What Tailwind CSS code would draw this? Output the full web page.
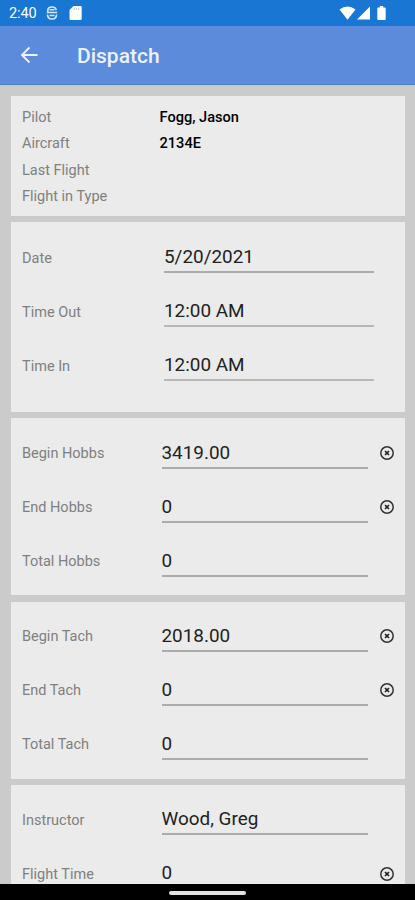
<!DOCTYPE html>
<html lang="en">
<head>
<meta charset="utf-8">
<title>Dispatch</title>
<script src="https://cdn.jsdelivr.net/npm/@tailwindcss/browser@4"></script>
</head>
<body class="w-[415px] h-[900px] overflow-hidden bg-[#cbcbcb] font-[Roboto,sans-serif] flex flex-col text-[14.5px] text-[#808080]">
<svg class="hidden">
  <symbol id="clear" viewBox="0 0 16 16"><circle cx="8" cy="8" r="6.2" fill="none" stroke="#333" stroke-width="1.5"/><path d="M6 6l4 4M10 6l-4 4" stroke="#222" stroke-width="1.7"/></symbol>
</svg>
<header class="shrink-0">
  <div class="h-[26px] bg-[#1976d2] flex items-center pl-[9px] pr-[28px] text-white">
    <span class="text-[14.5px] w-[29px] whitespace-nowrap tracking-[-0.1px] pt-[1px]">2:40</span>
    <svg class="ml-[8px] w-[12px] h-[14px]" viewBox="0 0 12 14" fill="none" stroke="#d5e6f8" stroke-width="1.6"><path d="M10.200 4.300C10 2 8.300 1 6 1S1.800 2 1.800 4.200V6.500M1.500 8.500C1.500 11.500 3.400 13 6 13s4.500-1.500 4.500-4.500M.8 6.500h10.400M3.500 3.800h5M3.500 9.500h5"/></svg>
    <svg class="ml-[11px] w-[13px] h-[14px]" viewBox="0 0 13 14"><path fill="#fff" d="M4.500 0H11.500Q12.700 0 12.700 1.200V12.800Q12.700 14 11.500 14H1.700Q.5 14 .5 12.800V4Z"/><path d="M5.200 2v2M7.500 2v2M9.800 2v2" stroke="#a9cbed" stroke-width="1"/></svg>
    <svg class="ml-auto w-[17px] h-[14px]" viewBox="0 0 17 14"><path fill="#fff" d="M.5 3.500Q8.500-2.500 16.500 3.500L8.500 13.700Z"/></svg>
    <svg class="ml-[1px] w-[13px] h-[14px]" viewBox="0 0 13 14"><path fill="#fff" d="M13 .5V13.500H0Z"/></svg>
    <svg class="ml-[7px] mr-[1px] w-[9px] h-[14px]" viewBox="0 0 9 15"><path fill="#fff" d="M2.700 0h3.600v1.500H8q1 0 1 1V14q0 1-1 1H1q-1 0-1-1V2.500q0-1 1-1h1.700Z"/></svg>
  </div>
  <div class="h-[59px] bg-[#5c8bdc] border-b border-[#4d80d2] flex items-center pl-[20px]">
    <svg class="w-[19px] h-[18px] mb-[1px]" viewBox="0 0 19 18" fill="none" stroke="#edf3fc" stroke-width="1.900"><path d="M17.500 9H2.500M9.500 1.500L2 9l7.500 7.500"/></svg>
    <h1 class="ml-[38px] mt-[4px] text-[21px] font-medium text-[#edf2fc]">Dispatch</h1>
  </div>
</header>
<main class="flex-1 min-h-0 overflow-hidden pt-[10.5px] pl-[11px] pr-[10px] flex flex-col">
  <section class="shrink-0 h-[120.500px] bg-[#ebebeb] pl-[11px] pt-[9.300px]">
    <div class="h-[26.300px] flex items-center"><span class="w-[137.500px]">Pilot</span><span class="text-black font-medium text-[14.600px]">Fogg, Jason</span></div>
    <div class="h-[26.300px] flex items-center"><span class="w-[137.500px]">Aircraft</span><span class="text-black font-medium text-[14.600px]">2134E</span></div>
    <div class="h-[26.300px] flex items-center">Last Flight</div>
    <div class="h-[26.300px] flex items-center">Flight in Type</div>
  </section>
  <section class="shrink-0 mt-[6px] h-[190px] bg-[#ebebeb] pl-[11px] pt-[8.500px]">
    <div class="h-[54px] flex items-center"><span class="w-[142px] pt-[2px]">Date</span><span class="w-[210px] h-[31px] leading-[29px] border-b-2 border-[#acacac] text-[18.900px] text-[#222]">5/20/2021</span></div>
    <div class="h-[54px] flex items-center"><span class="w-[142px] pt-[2px]">Time Out</span><span class="w-[210px] h-[31px] leading-[29px] border-b-2 border-[#b8b8b8] text-[18.900px] text-[#222]">12:00 AM</span></div>
    <div class="h-[54px] flex items-center"><span class="w-[142px] pt-[2px]">Time In</span><span class="w-[210px] h-[31px] leading-[29px] border-b-2 border-[#b8b8b8] text-[18.900px] text-[#222]">12:00 AM</span></div>
  </section>
  <section class="shrink-0 mt-[6px] h-[177px] bg-[#ebebeb] pl-[11px] pt-[8px]">
    <div class="h-[54px] flex items-center"><span class="w-[139.500px] pt-[2px]">Begin Hobbs</span><span class="w-[206.500px] h-[31px] leading-[29px] border-b-2 border-[#acacac] text-[18.900px] text-[#222]">3419.00</span><svg class="ml-[11px] w-[16px] h-[16px]"><use href="#clear"/></svg></div>
    <div class="h-[54px] flex items-center"><span class="w-[139.500px] pt-[2px]">End Hobbs</span><span class="w-[206.500px] h-[31px] leading-[29px] border-b-2 border-[#acacac] text-[18.900px] text-[#222]">0</span><svg class="ml-[11px] w-[16px] h-[16px]"><use href="#clear"/></svg></div>
    <div class="h-[54px] flex items-center"><span class="w-[139.500px] pt-[2px]">Total Hobbs</span><span class="w-[206.500px] h-[31px] leading-[29px] border-b-2 border-[#acacac] text-[18.900px] text-[#222]">0</span></div>
  </section>
  <section class="shrink-0 mt-[6.500px] h-[177px] bg-[#ebebeb] pl-[11px] pt-[7.500px]">
    <div class="h-[54px] flex items-center"><span class="w-[139.500px] pt-[2px]">Begin Tach</span><span class="w-[206.500px] h-[31px] leading-[29px] border-b-2 border-[#acacac] text-[18.900px] text-[#222]">2018.00</span><svg class="ml-[11px] w-[16px] h-[16px]"><use href="#clear"/></svg></div>
    <div class="h-[54px] flex items-center"><span class="w-[139.500px] pt-[2px]">End Tach</span><span class="w-[206.500px] h-[31px] leading-[29px] border-b-2 border-[#acacac] text-[18.900px] text-[#222]">0</span><svg class="ml-[11px] w-[16px] h-[16px]"><use href="#clear"/></svg></div>
    <div class="h-[54px] flex items-center"><span class="w-[139.500px] pt-[2px]">Total Tach</span><span class="w-[206.500px] h-[31px] leading-[29px] border-b-2 border-[#acacac] text-[18.900px] text-[#222]">0</span></div>
  </section>
  <section class="shrink-0 mt-[6px] h-[177px] bg-[#ebebeb] pl-[11px] pt-[8px]">
    <div class="h-[54px] flex items-center"><span class="w-[139.500px] pt-[2px]">Instructor</span><span class="w-[206.500px] h-[31px] leading-[29px] border-b-2 border-[#acacac] text-[18.900px] text-[#222]">Wood, Greg</span></div>
    <div class="h-[54px] flex items-center"><span class="w-[139.500px] pt-[2px]">Flight Time</span><span class="w-[206.500px] h-[31px] leading-[29px] border-b-2 border-[#acacac] text-[18.900px] text-[#222]">0</span><svg class="ml-[11px] w-[16px] h-[16px]"><use href="#clear"/></svg></div>
  </section>
</main>
<footer class="shrink-0 h-[16px] bg-black flex justify-center pt-[7px]"><div class="w-[77px] h-[4px] rounded-full bg-[#e2e2e2]"></div></footer>
</body>
</html>
